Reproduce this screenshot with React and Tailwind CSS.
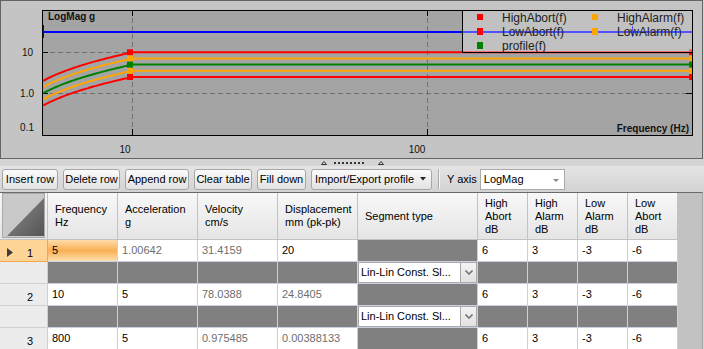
import React from "react";

const X = (f) => 132 + 295 * Math.log10(f / 10);
const Y = (v) => 93.3 - 41 * Math.log10(v);

function curvePath(k) {
  let d = "";
  for (let i = 0; i <= 50; i++) {
    const f = 5 + i * 0.1;
    const a = (1.00642 + ((f - 5) * (5 - 1.00642)) / 5) * k;
    d += (i ? "L" : "M") + X(f).toFixed(1) + "," + Y(a).toFixed(1) + " ";
  }
  d += "L700," + Y(5 * k).toFixed(1);
  return d;
}

const LINES = [
  { k: 2, c: "#ff0000" },
  { k: 1.413, c: "#ffa500" },
  { k: 0.708, c: "#ffa500" },
  { k: 0.5, c: "#ff0000" },
  { k: 1, c: "#008000" },
];

function Chart() {
  return (
    <div className="w-[703px] h-[159px] border border-[#646464] bg-[#c4c4c4]">
      <svg width="701" height="157" viewBox="1 1 701 157" className="block">
        <defs>
          <clipPath id="plot">
            <rect x="42" y="10" width="650" height="125" />
          </clipPath>
        </defs>
        <rect x="42" y="10" width="650" height="125" fill="#a4a4a4" />
        <g stroke="#707070" strokeWidth="1" strokeDasharray="5 3">
          <line x1="42" y1="52.5" x2="692" y2="52.5" />
          <line x1="42" y1="93.5" x2="692" y2="93.5" />
          <line x1="132.5" y1="10" x2="132.5" y2="135" />
          <line x1="427.5" y1="10" x2="427.5" y2="135" />
        </g>
        <g stroke="#000" strokeWidth="1">
          <line x1="132.5" y1="10" x2="132.5" y2="16" />
          <line x1="427.5" y1="10" x2="427.5" y2="16" />
          <line x1="132.5" y1="129" x2="132.5" y2="135" />
          <line x1="427.5" y1="129" x2="427.5" y2="135" />
          <line x1="42" y1="52.5" x2="48" y2="52.5" />
          <line x1="42" y1="93.5" x2="48" y2="93.5" />
          <line x1="686" y1="93.5" x2="692" y2="93.5" />
        </g>
        <g clipPath="url(#plot)">
          <line x1="42" y1="32" x2="692" y2="32" stroke="#0000ff" strokeWidth="2" />
          <line x1="43" y1="25" x2="43" y2="38" stroke="#0000ff" strokeWidth="2" />
          <line x1="632.5" y1="26" x2="632.5" y2="37" stroke="#0000ff" strokeWidth="1" />
          {LINES.map((l, i) => (
            <path key={i} d={curvePath(l.k)} stroke={l.c} strokeWidth="2" fill="none" />
          ))}
          {LINES.map((l, i) => (
            <g key={"m" + i} fill={l.c}>
              <rect x="127" y={Y(5 * l.k) - 3} width="6" height="6" />
              <rect x="689" y={Y(5 * l.k) - 3} width="6" height="6" />
            </g>
          ))}
        </g>
        <rect x="42.5" y="10.5" width="650" height="125" fill="none" stroke="#000" strokeWidth="1" />
        <rect x="462.5" y="10.5" width="230" height="42" fill="#ffffff" fillOpacity="0.32" stroke="#000" strokeWidth="1" />
        <g>
          <rect x="477" y="14" width="6" height="6" fill="#ff0000" />
          <rect x="477" y="28" width="6" height="7" fill="#ff0000" />
          <rect x="477" y="42" width="6" height="7" fill="#008000" />
          <rect x="592" y="14" width="6" height="6" fill="#ffa500" />
          <rect x="592" y="28" width="6" height="7" fill="#ffa500" />
        </g>
        <g fontSize="12" fill="#222" fontFamily="'Liberation Sans', Arial, sans-serif">
          <text x="502" y="21.5">HighAbort(f)</text>
          <text x="502" y="35.7">LowAbort(f)</text>
          <text x="502" y="49.5">profile(f)</text>
          <text x="617" y="21.5">HighAlarm(f)</text>
          <text x="617" y="35.7">LowAlarm(f)</text>
        </g>
        <g fontSize="10" fill="#111" fontFamily="'Liberation Sans', Arial, sans-serif">
          <text x="33" y="55.5" textAnchor="end">10</text>
          <text x="34" y="96.5" textAnchor="end">1.0</text>
          <text x="34" y="130.5" textAnchor="end">0.1</text>
          <text x="125" y="153" textAnchor="middle">10</text>
          <text x="417" y="153" textAnchor="middle">100</text>
        </g>
        <g fontSize="10" fontWeight="bold" fill="#111" fontFamily="'Liberation Sans', Arial, sans-serif">
          <text x="48" y="19.5">LogMag g</text>
          <text x="689" y="131.5" textAnchor="end">Frequency (Hz)</text>
        </g>
      </svg>
    </div>
  );
}

function Splitter() {
  return (
    <div className="h-[7px] w-[704px] bg-[#d5d5d5] relative">
      <svg width="64" height="7" className="absolute left-[320px] top-0">
        <polygon points="1.5,5.5 4,2.5 6.5,5.5" fill="none" stroke="#333" strokeWidth="1" />
        <polygon points="58.5,5.5 61,2.5 63.5,5.5" fill="none" stroke="#333" strokeWidth="1" />
        {[0, 1, 2, 3, 4, 5, 6, 7].map((i) => (
          <rect key={i} x={14 + i * 4} y="3" width="2" height="2" fill="#333" />
        ))}
      </svg>
    </div>
  );
}

function Btn({ w, children }) {
  return (
    <div
      className={`${w} h-[21px] flex items-center justify-center border border-[#a7a7a7] rounded-[3px] bg-gradient-to-b from-[#fbfbfb] to-[#e2e2e2] text-[11px] text-black whitespace-nowrap`}
    >
      {children}
    </div>
  );
}

function Toolbar() {
  return (
    <div className="h-[26px] w-[704px] flex items-center pl-[2px] bg-gradient-to-b from-[#e4e4e4] to-[#d3d3d3]">
      <div className="flex items-center gap-[5px]">
        <Btn w="w-[56px]">Insert row</Btn>
        <Btn w="w-[57px]">Delete row</Btn>
        <Btn w="w-[64px]">Append row</Btn>
        <Btn w="w-[58px]">Clear table</Btn>
        <Btn w="w-[49px]">Fill down</Btn>
        <div className="w-[121px] h-[21px] flex items-center pl-[3px] border border-[#a7a7a7] rounded-[3px] bg-gradient-to-b from-[#fbfbfb] to-[#e2e2e2] text-[11px] text-black whitespace-nowrap">
          <span>Import/Export profile</span>
          <svg width="6" height="4" className="ml-[6px]">
            <polygon points="0,0 6,0 3,3.5" fill="#222" />
          </svg>
        </div>
      </div>
      <div className="ml-[6px] h-[20px] w-[2px] border-l border-[#a9a9a9] border-r border-r-[#f7f7f7]" />
      <span className="ml-[7px] text-[11px] text-black">Y axis</span>
      <div className="ml-[3px] w-[85px] h-[21px] bg-white border border-[#aaaaaa] flex items-center pl-[3px] text-[11px] text-black relative">
        LogMag
        <svg width="6" height="4" className="absolute right-[5px] top-[9px]">
          <polygon points="0,0 6,0 3,3" fill="#8a8a8a" />
        </svg>
      </div>
    </div>
  );
}

const COLS = [
  { w: "w-[70px]", h: ["Frequency", "Hz"] },
  { w: "w-[80px]", h: ["Acceleration", "g"] },
  { w: "w-[80px]", h: ["Velocity", "cm/s"] },
  { w: "w-[80px]", h: ["Displacement", "mm (pk-pk)"] },
  { w: "w-[120px]", h: ["Segment type"] },
  { w: "w-[50px]", h: ["High", "Abort", "dB"] },
  { w: "w-[50px]", h: ["High", "Alarm", "dB"] },
  { w: "w-[50px]", h: ["Low", "Alarm", "dB"] },
  { w: "w-[50px]", h: ["Low", "Abort", "dB"] },
];

const ROWS = [
  { n: 1, v: [["5", 1], ["1.00642", 0], ["31.4159", 0], ["20", 1]] },
  { n: 2, v: [["10", 1], ["5", 1], ["78.0388", 0], ["24.8405", 0]] },
  { n: 3, v: [["800", 1], ["5", 1], ["0.975485", 0], ["0.00388133", 0]] },
];

function Corner() {
  return (
    <div className="w-[48px] h-[47px] border-r border-b border-[#c2c2c2] bg-gradient-to-b from-[#f8f8f8] to-[#e5e5e5]">
      <svg width="47" height="46" className="block">
        <defs>
          <linearGradient id="tri" x1="0" y1="0" x2="1" y2="1">
            <stop offset="0" stopColor="#8c8c8c" />
            <stop offset="1" stopColor="#555555" />
          </linearGradient>
        </defs>
        <rect x="2.5" y="0.5" width="42" height="44" fill="#c9c9c9" stroke="#a9a9a9" />
        <polygon points="7,43 44,5 44,43" fill="url(#tri)" />
      </svg>
    </div>
  );
}

function Header() {
  return (
    <div className="flex">
      <Corner />
      {COLS.map((c, i) => (
        <div
          key={i}
          className={`${c.w} h-[47px] border-r border-b border-[#c2c2c2] bg-gradient-to-b from-[#f8f8f8] to-[#e5e5e5] flex flex-col justify-center pl-[7px] text-[11px] leading-[13px] text-black`}
        >
          {c.h.map((t, j) => (
            <div key={j}>{t}</div>
          ))}
        </div>
      ))}
    </div>
  );
}

function RowHead({ n, selected }) {
  if (selected) {
    return (
      <div className="w-[48px] h-[22px] border-r border-b border-[#f2a54c] bg-[#fed596] relative flex items-center justify-end pr-[14px] pt-[5px] text-[11px] text-black">
        <svg width="7" height="10" className="absolute left-[7px] top-[8px]">
          <polygon points="0,0 6,4.5 0,9" fill="#3c3c3c" />
        </svg>
        {n}
      </div>
    );
  }
  return (
    <div className="w-[48px] h-[22px] border-r border-b border-[#cfcfcf] bg-[#ececec] flex items-center justify-end pr-[14px] pt-[5px] text-[11px] text-black">
      {n}
    </div>
  );
}

function DataRow({ row }) {
  const sel = row.n === 1;
  return (
    <div className="flex">
      <RowHead n={row.n} selected={sel} />
      {row.v.map(([t, dark], i) => (
        <div
          key={i}
          className={`${COLS[i].w} h-[22px] border-r border-b border-[#c9d1df] flex items-center pl-[4px] text-[11px] ${
            dark ? "text-black" : "text-[#6e6e6e]"
          } ${
            sel && i === 0
              ? "bg-[linear-gradient(to_bottom,#fddcaa,#f9b055_50%,#fbc77f_75%,#fde0b2)]"
              : "bg-white"
          }`}
        >
          {t}
        </div>
      ))}
      <div className="w-[120px] h-[22px] border-r border-b border-[#c9d1df] bg-[#808080]" />
      {["6", "3", "-3", "-6"].map((t, i) => (
        <div
          key={i}
          className="w-[50px] h-[22px] border-r border-b border-[#c9d1df] bg-white flex items-center pl-[4px] text-[11px] text-black"
        >
          {t}
        </div>
      ))}
    </div>
  );
}

function SubRow() {
  return (
    <div className="flex">
      <div className="w-[48px] h-[22px] border-r border-b border-[#cfcfcf] bg-[#ececec]" />
      {[0, 1, 2, 3].map((i) => (
        <div key={i} className={`${COLS[i].w} h-[22px] border-r border-b border-[#c9d1df] bg-[#808080]`} />
      ))}
      <div className="w-[120px] h-[22px] border-r border-b border-[#c9d1df] flex">
        <div className="w-[103px] h-full bg-white border border-[#a9a9a9] flex items-center pl-[2px] text-[11px] text-black whitespace-nowrap overflow-hidden">
          Lin-Lin Const. Sl...
        </div>
        <div className="w-[16px] h-full bg-gradient-to-b from-[#f3f3f3] to-[#e2e2e2] border-y border-r border-[#a9a9a9] flex items-center justify-center">
          <svg width="8" height="5">
            <polyline points="0.5,0.5 4,4 7.5,0.5" fill="none" stroke="#777" strokeWidth="1.6" />
          </svg>
        </div>
      </div>
      {[0, 1, 2, 3].map((i) => (
        <div key={i} className="w-[50px] h-[22px] border-r border-b border-[#c9d1df] bg-[#808080]" />
      ))}
    </div>
  );
}

function Table() {
  return (
    <div className="w-[703px] h-[157px] border-t border-[#6a6a6a] border-r border-r-[#a8a8a8] bg-[#c2c2c2] overflow-hidden">
      <Header />
      <DataRow row={ROWS[0]} />
      <SubRow />
      <DataRow row={ROWS[1]} />
      <SubRow />
      <DataRow row={ROWS[2]} />
    </div>
  );
}

export default function App() {
  return (
    <div className="w-[704px] h-[349px] overflow-hidden bg-[#d5d5d5] font-['Liberation_Sans',Arial,sans-serif]">
      <Chart />
      <Splitter />
      <Toolbar />
      <Table />
    </div>
  );
}
